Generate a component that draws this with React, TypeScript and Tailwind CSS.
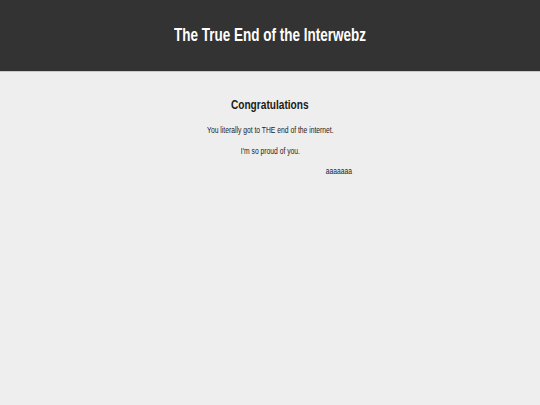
const squish = "inline-block scale-x-75 origin-center whitespace-nowrap";

export default function App() {
  return (
    <div className="min-h-[405px] bg-[#eeeeee] font-['Liberation_Sans',Arial,sans-serif]">
      <header className="flex h-[72px] items-center justify-center border-b border-[#c8c8c8] bg-[#333333]">
        <h1 className="text-[18px] font-bold text-white">
          <span className={squish}>The True End of the Interwebz</span>
        </h1>
      </header>
      <main className="mx-auto flex w-[164px] flex-col items-center pt-[25px] text-[#1a1a1a]">
        <h2 className="text-[13.5px] font-bold leading-[16px]">
          <span className={squish}>Congratulations</span>
        </h2>
        <p className="mt-[12px] text-[9px] leading-[11px]">
          <span className={squish}>You literally got to THE end of the internet.</span>
        </p>
        <p className="mt-[10px] text-[9px] leading-[11px]">
          <span className={squish}>I'm so proud of you.</span>
        </p>
        <p className="mt-[9px] self-end text-[9px] leading-[11px]">
          <span className={`${squish} origin-right`}>aaaaaaa</span>
        </p>
      </main>
    </div>
  );
}
